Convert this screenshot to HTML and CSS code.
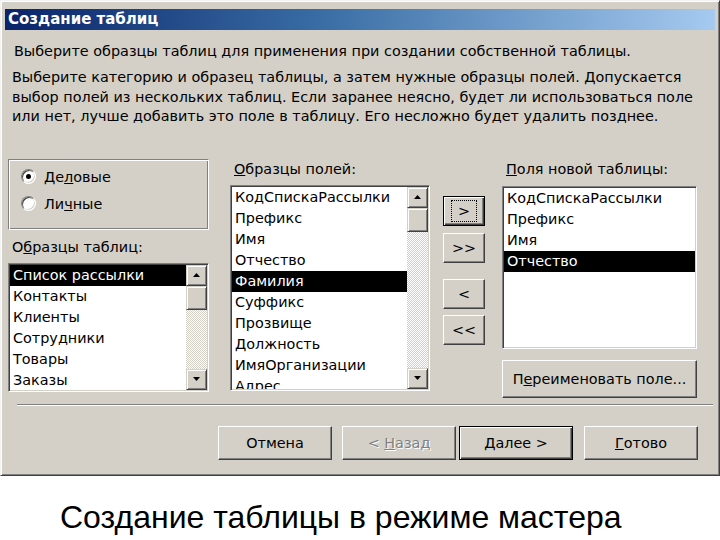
FILE: index.html
```html
<!DOCTYPE html>
<html lang="ru">
<head>
<meta charset="utf-8">
<title>Создание таблиц</title>
<link rel="stylesheet" href="styles.css">
</head>
<body>
<div class="window">
  <div class="titlebar">Создание таблиц</div>
  <div class="content">
    <p class="intro">Выберите образцы таблиц для применения при создании собственной таблицы.</p>
    <p class="desc">Выберите категорию и образец таблицы, а затем нужные образцы полей. Допускается<br>выбор полей из нескольких таблиц. Если заранее неясно, будет ли использоваться поле<br>или нет, лучше добавить это поле в таблицу. Его несложно будет удалить позднее.</p>
    <div class="main">
      <div class="col col1">
        <div class="group">
          <div class="radio-row"><span class="radio checked"></span><span>Де<u>л</u>овые</span></div>
          <div class="radio-row"><span class="radio"></span><span>Ли<u>ч</u>ные</span></div>
        </div>
        <div class="label label1">О<u>б</u>разцы таблиц:</div>
        <div class="listbox lb1">
          <ul class="items">
            <li class="sel">Список рассылки</li>
            <li>Контакты</li>
            <li>Клиенты</li>
            <li>Сотрудники</li>
            <li>Товары</li>
            <li>Заказы</li>
          </ul>
          <div class="scrollbar">
            <div class="sbtn"><svg width="7" height="4" viewBox="0 0 7 4"><polygon points="3.5,0 7,4 0,4" fill="#000"/></svg></div>
            <div class="thumb"></div>
            <div class="track"></div>
            <div class="sbtn"><svg width="7" height="4" viewBox="0 0 7 4"><polygon points="0,0 7,0 3.5,4" fill="#000"/></svg></div>
          </div>
        </div>
      </div>
      <div class="col col2">
        <div class="label"><u>О</u>бразцы полей:</div>
        <div class="listbox lb2">
          <ul class="items">
            <li>КодСпискаРассылки</li>
            <li>Префикс</li>
            <li>Имя</li>
            <li>Отчество</li>
            <li class="sel">Фамилия</li>
            <li>Суффикс</li>
            <li>Прозвище</li>
            <li>Должность</li>
            <li>ИмяОрганизации</li>
            <li>Адрес</li>
          </ul>
          <div class="scrollbar">
            <div class="sbtn"><svg width="7" height="4" viewBox="0 0 7 4"><polygon points="3.5,0 7,4 0,4" fill="#000"/></svg></div>
            <div class="thumb"></div>
            <div class="track"></div>
            <div class="sbtn"><svg width="7" height="4" viewBox="0 0 7 4"><polygon points="0,0 7,0 3.5,4" fill="#000"/></svg></div>
          </div>
        </div>
      </div>
      <div class="col col3">
        <button class="btn move default"><span class="focus">&gt;</span></button>
        <button class="btn move m2"><span>&gt;&gt;</span></button>
        <button class="btn move m3"><span>&lt;</span></button>
        <button class="btn move m4"><span>&lt;&lt;</span></button>
      </div>
      <div class="col col4">
        <div class="label"><u>П</u>оля новой таблицы:</div>
        <div class="listbox lb3">
          <ul class="items">
            <li>КодСпискаРассылки</li>
            <li>Префикс</li>
            <li>Имя</li>
            <li class="sel">Отчество</li>
          </ul>
        </div>
        <button class="btn rename"><span>П<u>е</u>реименовать поле...</span></button>
      </div>
    </div>
    <div class="sep"></div>
    <div class="footer">
      <button class="btn fbtn"><span>Отмена</span></button>
      <button class="btn fbtn disabled"><span>&lt; <u>Н</u>азад</span></button>
      <button class="btn fbtn default next"><span><u>Д</u>алее &gt;</span></button>
      <button class="btn fbtn done"><span><u>Г</u>отово</span></button>
    </div>
  </div>
</div>
<div class="caption">Создание таблицы в режиме мастера</div>
</body>
</html>
```
FILE: styles.css
```css
html, body {
  margin: 0;
  padding: 0;
  background: #fff;
}

body {
  width: 720px;
  height: 540px;
  overflow: hidden;
}

.window {
  box-sizing: border-box;
  width: 720px;
  height: 476px;
  background: #d4d0c8;
  border: 1px solid;
  border-color: #f2f2f2 #404040 #404040 #f2f2f2;
  box-shadow: inset 1px 1px #fff, inset -1px -1px #808080;
  padding: 8px 4px 0 4px;
  font-family: "DejaVu Sans", Tahoma, sans-serif;
  font-size: 14.4px;
  color: #000;
}

.titlebar {
  height: 21px;
  line-height: 21px;
  padding-left: 3px;
  background: linear-gradient(to right, #0a246a, #3a6ea5 45%, #a6caf0);
  color: #fff;
  font-weight: bold;
  font-size: 15px;
}

.content {
  display: flex;
  flex-direction: column;
}

.intro {
  margin: 11px 0 0 9px;
  line-height: 20px;
  white-space: nowrap;
}

.desc {
  margin: 7px 0 0 7px;
  line-height: 19.5px;
  white-space: nowrap;
}

.main {
  display: flex;
  align-items: flex-start;
  margin-top: 32px;
  height: 241px;
}

.col {
  display: flex;
  flex-direction: column;
}

.col1 {
  width: 201px;
  margin-left: 3px;
}

.col2 {
  width: 200px;
  margin-left: 21px;
}

.col3 {
  width: 42px;
  margin-left: 13px;
  padding-top: 37px;
}

.col4 {
  width: 195px;
  margin-left: 17px;
}

.group {
  box-sizing: border-box;
  height: 71px;
  border: 1px solid;
  border-color: #808080 #fff #fff #808080;
  box-shadow: inset 1px 1px #fff, inset -1px -1px #808080;
  padding: 7px 0 0 12px;
  display: flex;
  flex-direction: column;
  gap: 7px;
}

.radio-row {
  display: flex;
  align-items: center;
  gap: 8px;
  height: 20px;
}

.radio {
  box-sizing: border-box;
  width: 15px;
  height: 15px;
  border-radius: 50%;
  border: 1px solid;
  border-color: #808080 #fff #fff #808080;
  box-shadow: inset 1px 1px #404040, inset -1px -1px #d4d0c8;
  background: #fff;
  display: flex;
  align-items: center;
  justify-content: center;
}

.radio.checked::after {
  content: "";
  width: 5px;
  height: 5px;
  border-radius: 50%;
  background: #000;
}

.label {
  line-height: 20px;
  height: 20px;
  padding-left: 4px;
  white-space: nowrap;
}

.label1 {
  margin-top: 7px;
  padding-left: 4px;
}

.listbox {
  box-sizing: border-box;
  display: flex;
  background: #fff;
  border: 1px solid;
  border-color: #808080 #fff #fff #808080;
  box-shadow: inset 1px 1px #404040, inset -1px -1px #d4d0c8;
  padding: 1px;
  overflow: hidden;
}

.lb1 {
  margin-top: 6px;
  height: 129px;
}

.lb2 {
  margin-top: 6px;
  height: 206px;
}

.lb3 {
  margin-top: 7px;
  height: 163px;
}

.items {
  list-style: none;
  margin: 0;
  padding: 0;
  flex: 1;
  min-width: 0;
  overflow: hidden;
}

.items li {
  height: 21px;
  line-height: 21px;
  padding-left: 3px;
  white-space: nowrap;
}

.items li.sel {
  background: #000;
  color: #fff;
}

.scrollbar {
  width: 21px;
  display: flex;
  flex-direction: column;
  flex-shrink: 0;
}

.sbtn, .thumb {
  box-sizing: border-box;
  background: #d4d0c8;
  border: 1px solid;
  border-color: #d4d0c8 #404040 #404040 #d4d0c8;
  box-shadow: inset 1px 1px #fff, inset -1px -1px #808080;
}

.sbtn {
  height: 21px;
  flex-shrink: 0;
  display: flex;
  align-items: center;
  justify-content: center;
}

.thumb {
  height: 24px;
  flex-shrink: 0;
}

.track {
  flex: 1;
  background: repeating-conic-gradient(#fff 0 25%, #d4d0c8 0 50%) 0 0 / 2px 2px;
}

.btn {
  box-sizing: border-box;
  background: #d4d0c8;
  font-family: "DejaVu Sans", Tahoma, sans-serif;
  font-size: 14.4px;
  color: #000;
  border: 1px solid;
  border-color: #fff #404040 #404040 #fff;
  box-shadow: inset -1px -1px #808080, inset 1px 1px #d4d0c8;
  padding: 0;
  display: flex;
  align-items: center;
  justify-content: center;
  white-space: nowrap;
}

.btn.default {
  border-color: #000;
  box-shadow: inset 1px 1px #fff, inset -1px -1px #404040, inset -2px -2px #808080;
}

.move {
  width: 42px;
  height: 30px;
}

.m2 {
  margin-top: 7px;
}

.m3 {
  margin-top: 16px;
}

.m4 {
  margin-top: 6px;
}

.focus {
  outline: 1px dotted #000;
  padding: 1px 6px;
  line-height: 18px;
}

.rename {
  margin-top: 11px;
  width: 195px;
  height: 38px;
}

.sep {
  margin: 4px 0 0 12px;
  width: 696px;
  height: 0;
  border-top: 1px solid #808080;
  border-bottom: 1px solid #fff;
}

.footer {
  display: flex;
  justify-content: flex-end;
  padding-right: 17px;
  margin-top: 20px;
}

.fbtn {
  width: 114px;
  height: 34px;
}

.fbtn.disabled {
  color: #808080;
  text-shadow: 1px 1px #fff;
  margin-left: 10px;
}

.next {
  margin-left: 3px;
}

.done {
  margin-left: 11px;
}

.caption {
  font-family: "Liberation Sans", Arial, sans-serif;
  font-size: 32px;
  line-height: 40px;
  margin-top: 21px;
  padding-left: 60px;
  color: #000;
  white-space: nowrap;
}
```
